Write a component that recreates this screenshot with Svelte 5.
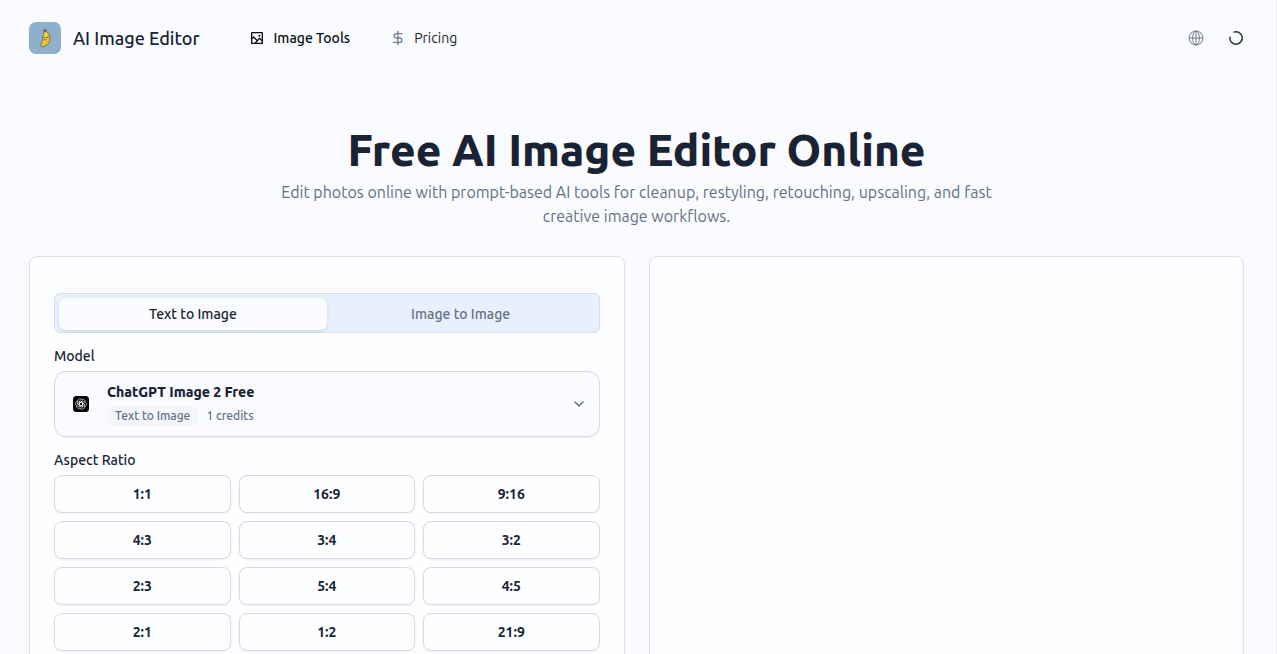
<script>
  const ratios = ['1:1', '16:9', '9:16', '4:3', '3:4', '3:2', '2:3', '5:4', '4:5', '2:1', '1:2', '21:9'];
  const modes = ['Text to Image', 'Image to Image'];
  let mode = $state('Text to Image');
  let ratio = $state('');
</script>

<div class="page">
  <header>
    <a class="brand" href="#home">
      <svg class="logo" viewBox="0 0 32 32" aria-hidden="true">
        <rect width="32" height="32" rx="7" fill="#8eb0cc" />
        <path d="M14.800 8.200l1.900-.7.8 2.200c2.600 1.800 3.900 4.700 3.300 8-.7 4-4 7-7.800 6.700-1.500-.2-1.900-1.400-.9-2.300 1.500-1.600 1.800-3 1.500-5.300-.3-2.400.4-3.700 1.500-5z" fill="#f5d33c" stroke="#61593a" stroke-width=".8" stroke-linejoin="round" />
        <path d="M14.800 8.200l1.900-.7.5 1.700-1.500.7z" fill="#4d4936" />
        <path d="M19 12.500c1.300 4.700-.7 8.700-5 10.300" fill="none" stroke="#c79c22" stroke-width=".9" />
        <path d="M14.400 15.200l1.200.4M17.300 15.500l1.200-.3M15 17.300c.6.9 1.700.9 2.300.2" fill="none" stroke="#493d26" stroke-width=".8" stroke-linecap="round" />
      </svg>
      <span>AI Image Editor</span>
    </a>
    <nav>
      <a class="active" href="#tools">
        <svg width="16" height="16" viewBox="0 0 24 24" fill="currentColor" aria-hidden="true">
          <path d="M5 11.100l2-2 5.500 5.500 3.500-3.500 3 3V5H5v6.100zm0 2.829V19h3.100l2.986-2.985L7 11.929l-2 2zM10.929 19H19v-2.071l-3-3L10.929 19zM4 3h16a1 1 0 011 1v16a1 1 0 01-1 1H4a1 1 0 01-1-1V4a1 1 0 011-1zm11.500 7a1.500 1.500 0 110-3 1.500 1.500 0 010 3z" />
        </svg>
        Image Tools
      </a>
      <a href="#pricing">
        <svg class="muted" width="16" height="16" viewBox="0 0 24 24" fill="none" stroke="currentColor" stroke-width="2" stroke-linecap="round" aria-hidden="true">
          <path d="M12 2v20M18 5.500H9.500a3.250 3.250 0 000 6.500h5a3.250 3.250 0 010 6.500H5" />
        </svg>
        Pricing
      </a>
    </nav>
    <div class="actions">
      <button aria-label="Language">
        <svg class="muted" width="16" height="16" viewBox="0 0 24 24" fill="none" stroke="currentColor" stroke-width="1.500" aria-hidden="true">
          <circle cx="12" cy="12" r="10.500" />
          <ellipse cx="12" cy="12" rx="5" ry="10.500" />
          <path d="M1.500 12h21M12 1.500v21" />
        </svg>
      </button>
      <span role="status" aria-label="Loading">
        <svg width="16" height="16" viewBox="0 0 16 16" fill="none" stroke="#2b303b" stroke-width="1.500" stroke-linecap="round" aria-hidden="true">
          <path d="M6 2.100A6.200 6.200 0 111.900 7.200" />
        </svg>
      </span>
    </div>
  </header>

  <main>
    <section class="hero">
      <h1>Free AI Image Editor Online</h1>
      <p>Edit photos online with prompt-based AI tools for cleanup, restyling, retouching, upscaling, and fast creative image workflows.</p>
    </section>

    <div class="workspace">
      <section class="card" aria-label="Settings">
        <div class="tabs" role="tablist">
          {#each modes as m}
            <button role="tab" aria-selected={mode === m} class:selected={mode === m} onclick={() => (mode = m)}>{m}</button>
          {/each}
        </div>

        <div class="field">
          <span class="label" id="model-label">Model</span>
          <button class="model" aria-labelledby="model-label model-name" aria-haspopup="listbox">
            <svg class="model-icon" width="16" height="16" viewBox="0 0 16 16" aria-hidden="true">
              <rect width="16" height="16" rx="3.500" fill="#000" />
              <g fill="none" stroke="#fff" stroke-width=".55" stroke-linejoin="round">
                {#each [0, 60, 120, 180, 240, 300] as angle}
                  <path transform="rotate({angle} 8 8)" d="M6.300 9V5L8.800 3.500A2.500 2.500 0 0112.300 6.500M6.300 7L8 6l3.500 2" />
                {/each}
              </g>
            </svg>
            <span class="details">
              <span class="name" id="model-name">ChatGPT Image 2 Free</span>
              <span class="meta"><span class="badge">Text to Image</span><span>1 credits</span></span>
            </span>
            <svg class="chevron" width="16" height="16" viewBox="0 0 24 24" fill="none" stroke="currentColor" stroke-width="2" stroke-linecap="round" stroke-linejoin="round" aria-hidden="true">
              <path d="M6 9l6 6 6-6" />
            </svg>
          </button>
        </div>

        <div class="field">
          <span class="label" id="ratio-label">Aspect Ratio</span>
          <div class="ratios" role="group" aria-labelledby="ratio-label">
            {#each ratios as r}
              <button aria-pressed={ratio === r} onclick={() => (ratio = r)}>{r}</button>
            {/each}
          </div>
        </div>
      </section>
      <section class="card" aria-label="Result"></section>
    </div>
  </main>
</div>

<style>
  :global(body) {
    background: #f9fbff;
  }
  .page {
    height: 100vh;
    overflow: hidden;
    box-sizing: border-box;
    padding: 0 32px 0 29px;
    border-right: 1px solid #eff1f5;
    color: #1a2333;
    font-family: Ubuntu, 'Open Sans', 'Noto Sans', sans-serif;
    font-size: 14px;
    line-height: 20px;
  }
  svg {
    display: block;
    flex: none;
  }
  button {
    padding: 0;
    border: 0;
    background: none;
    color: inherit;
    font: inherit;
    cursor: pointer;
  }
  a {
    color: inherit;
    text-decoration: none;
  }
  .muted {
    color: #737b8c;
  }
  header {
    display: flex;
    align-items: center;
    height: 76px;
  }
  .brand {
    display: flex;
    align-items: center;
    gap: 12px;
    font-size: 18px;
    font-weight: 500;
  }
  .logo {
    width: 32px;
    height: 32px;
  }
  nav {
    display: flex;
    gap: 40px;
    margin-left: 50px;
  }
  nav a {
    display: flex;
    align-items: center;
    gap: 8px;
  }
  nav .active {
    color: #0b0d12;
    font-weight: 500;
  }
  .actions {
    display: flex;
    align-items: center;
    gap: 24px;
    margin-left: auto;
  }
  .hero {
    display: flex;
    flex-direction: column;
    align-items: center;
    gap: 6px;
    padding: 50px 0 28px;
    text-align: center;
  }
  h1 {
    margin: 0;
    font-size: 44px;
    line-height: 48px;
    font-weight: 800;
  }
  p {
    max-width: 768px;
    margin: 0;
    color: #647184;
    font-size: 16px;
    line-height: 24px;
  }
  .workspace {
    display: grid;
    grid-template-columns: 1fr 1fr;
    gap: 24px;
  }
  .card {
    display: flex;
    flex-direction: column;
    gap: 13px;
    padding: 36px 24px;
    border: 1px solid #e0e3ea;
    border-radius: 8px;
    background: #fdfeff;
    box-shadow: 0 1px 2px #1018280d;
  }
  .tabs {
    display: grid;
    grid-template-columns: 1fr 1fr;
    padding: 4px 4px 2px;
    border: 1px solid #d8dde7;
    border-radius: 6px;
    background: #e8f0fe;
    color: #647184;
    font-weight: 500;
  }
  .tabs button {
    height: 32px;
    border-radius: 6px;
  }
  .tabs .selected {
    background: #f9fbff;
    color: #1a2333;
    box-shadow: 0 1px 3px #10182826;
  }
  .field {
    display: flex;
    flex-direction: column;
    gap: 5px;
  }
  .label {
    font-weight: 500;
  }
  .model {
    display: flex;
    align-items: center;
    gap: 18px;
    padding: 10px 12px 10px 18px;
    border: 1px solid #d5d9e0;
    border-radius: 12px;
    background: #f9fbff;
    box-shadow: 0 1px 2px #1018280d;
    text-align: left;
  }
  .details {
    display: flex;
    flex: 1;
    flex-direction: column;
    gap: 4px;
  }
  .name {
    font-weight: 800;
  }
  .meta {
    display: flex;
    align-items: center;
    gap: 8px;
    color: #647184;
    font-size: 12px;
    font-weight: 500;
  }
  .badge {
    padding: 0 8px;
    border-radius: 6px;
    background: #f3f7fc;
  }
  .chevron {
    color: #5c6678;
  }
  .ratios {
    display: grid;
    grid-template-columns: repeat(3, 1fr);
    gap: 8px;
  }
  .ratios button {
    height: 38px;
    border: 1px solid #d7dae1;
    border-radius: 8px;
    background: #fdfeff;
    box-shadow: 0 1px 2px #1018280d;
    font-weight: 600;
  }
</style>
